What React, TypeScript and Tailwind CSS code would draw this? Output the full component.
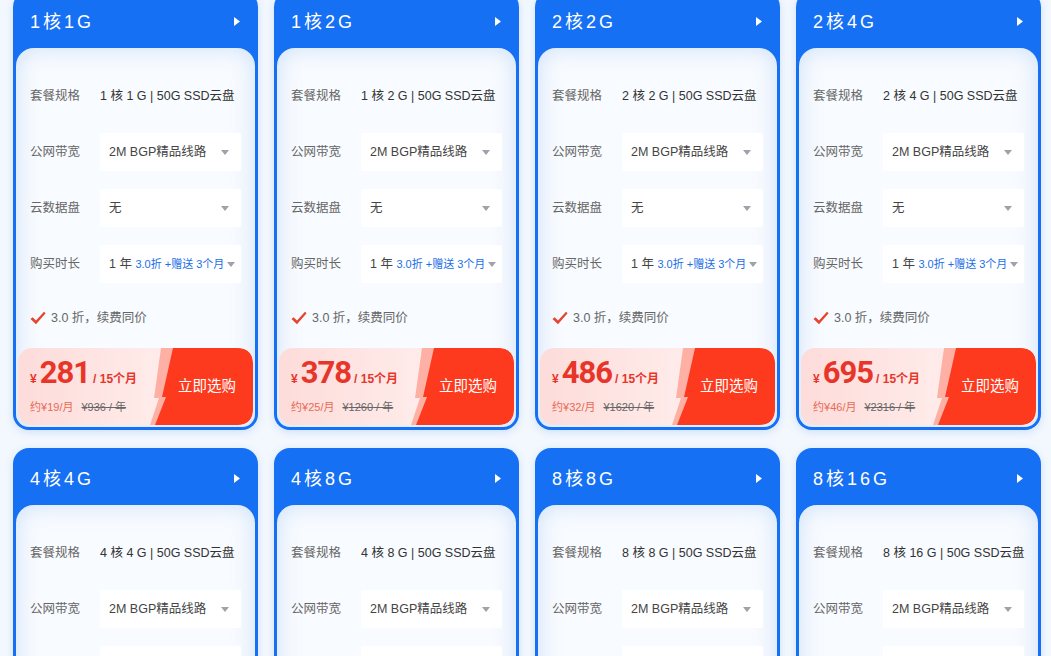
import React from 'react';

interface Plan {
  title: string;
  spec: string;
  price: number;
  monthly: number;
  yearly: number;
}

const plans: Plan[] = [
  { title: '1核1G', spec: '1 核 1 G | 50G SSD云盘', price: 281, monthly: 19, yearly: 936 },
  { title: '1核2G', spec: '1 核 2 G | 50G SSD云盘', price: 378, monthly: 25, yearly: 1260 },
  { title: '2核2G', spec: '2 核 2 G | 50G SSD云盘', price: 486, monthly: 32, yearly: 1620 },
  { title: '2核4G', spec: '2 核 4 G | 50G SSD云盘', price: 695, monthly: 46, yearly: 2316 },
  { title: '4核4G', spec: '4 核 4 G | 50G SSD云盘', price: 885, monthly: 59, yearly: 2952 },
  { title: '4核8G', spec: '4 核 8 G | 50G SSD云盘', price: 1248, monthly: 83, yearly: 4160 },
  { title: '8核8G', spec: '8 核 8 G | 50G SSD云盘', price: 1668, monthly: 111, yearly: 5560 },
  { title: '8核16G', spec: '8 核 16 G | 50G SSD云盘', price: 2491, monthly: 166, yearly: 8304 },
];

const Caret = () => (
  <svg width="8" height="5" viewBox="0 0 8 5" className="shrink-0">
    <path d="M0 0 L8 0 L4 5 Z" fill="#9ea3ab" />
  </svg>
);

const SelectBox: React.FC<{ children: React.ReactNode }> = ({ children }) => (
  <div className="flex h-[38px] min-w-0 flex-1 items-center justify-between gap-[3px] overflow-hidden rounded-[2px] bg-white pl-[9px] pr-[12px] text-[12.5px] text-[#444]">
    <div className="whitespace-nowrap">{children}</div>
    <Caret />
  </div>
);

const Row: React.FC<{ label: string; children: React.ReactNode }> = ({ label, children }) => (
  <div className="flex h-[38px] items-center">
    <div className="w-[70px] shrink-0 text-[12.5px] text-[#666]">{label}</div>
    {children}
  </div>
);

const BuyButton = () => (
  <div className="relative flex w-[103px] shrink-0 items-center justify-end pr-[17px]">
    <svg
      className="absolute inset-0 h-full w-full"
      viewBox="0 0 103 77"
      preserveAspectRatio="none"
    >
      <path
        d="M11 0 L87 0 Q103 0 103 16 L103 61 Q103 77 87 77 L0 77 L9 50 L4 50 Z"
        fill="#ffb0a4"
      />
      <path
        d="M23 0 L87 0 Q103 0 103 16 L103 61 Q103 77 87 77 L5 77 L16 49 L12 49 Z"
        fill="#fd3a1d"
      />
    </svg>
    <span className="relative text-[14.5px] text-white">立即选购</span>
  </div>
);

const Card: React.FC<{ plan: Plan }> = ({ plan }) => (
  <div className="flex h-[439px] flex-col rounded-[16px] bg-[#1570f4] px-[3px] pb-[3px] shadow-[0_2px_8px_rgba(40,110,220,0.18)]">
    <div className="flex h-[57px] shrink-0 items-start justify-between pl-[14px] pr-[15px] pt-[21px]">
      <span className="text-[18px] leading-[20px] tracking-[3px] text-white">{plan.title}</span>
      <svg width="6" height="9" viewBox="0 0 6 9" className="mt-[5px]">
        <path d="M0 0 L6 4.5 L0 9 Z" fill="#ffffff" />
      </svg>
    </div>

    <div className="flex flex-1 flex-col rounded-b-[13px] rounded-t-[18px] bg-[#f8fbff] shadow-[inset_0_0_22px_rgba(150,190,240,0.45)]">
      <div className="flex flex-col gap-[18px] px-[14px] pt-[29px]">
        <Row label="套餐规格">
          <div className="whitespace-nowrap text-[12.5px] text-[#333]">{plan.spec}</div>
        </Row>
        <Row label="公网带宽">
          <SelectBox>2M BGP精品线路</SelectBox>
        </Row>
        <Row label="云数据盘">
          <SelectBox>无</SelectBox>
        </Row>
        <Row label="购买时长">
          <SelectBox>
            1 年 <span className="text-[11px] text-[#1a6fe8]">3.0折 +赠送 3个月</span>
          </SelectBox>
        </Row>
      </div>

      <div className="mt-[25px] flex h-[20px] items-center gap-[5px] px-[14px]">
        <svg width="16" height="14" viewBox="0 0 16 14">
          <path d="M0.5 8 L2.6 6.2 L6 9.4 L14 0.8 L15.6 2.2 L6 13.2 Z" fill="#e8432e" />
        </svg>
        <span className="text-[12.5px] text-[#666]">3.0 折，续费同价</span>
      </div>

      <div className="mx-[2px] mb-[2px] mt-auto flex h-[77px] overflow-hidden rounded-[14px] bg-gradient-to-r from-[#fddcda] to-[#fff6f4]">
        <div className="flex flex-1 flex-col pl-[12px] pt-[9px]">
          <div className="flex items-baseline text-[#e8352a]">
            <span className="mr-[3px] text-[12px] font-bold">¥</span>
            <span className="text-[31px] font-bold leading-[32px] tracking-[-1px] [font-family:Roboto,'Liberation_Sans',sans-serif]">
              {plan.price}
            </span>
            <span className="ml-[3px] text-[12px] font-bold">/ 15个月</span>
          </div>
          <div className="mt-[10px] flex items-center gap-[8px] text-[11px]">
            <span className="text-[#e96a55]">约¥{plan.monthly}/月</span>
            <span className="text-[#666] line-through">¥{plan.yearly} / 年</span>
          </div>
        </div>
        <BuyButton />
      </div>
    </div>
  </div>
);

export default function App() {
  return (
    <div className="h-[656px] overflow-hidden bg-[#f3f8fe] pl-[13px] pr-[10px] [font-family:'Liberation_Sans','Noto_Sans_CJK_SC',sans-serif]">
      <div className="-mt-[9px] grid grid-cols-4 gap-x-[16px] gap-y-[18px]">
        {plans.map((plan) => (
          <Card key={plan.title} plan={plan} />
        ))}
      </div>
    </div>
  );
}
